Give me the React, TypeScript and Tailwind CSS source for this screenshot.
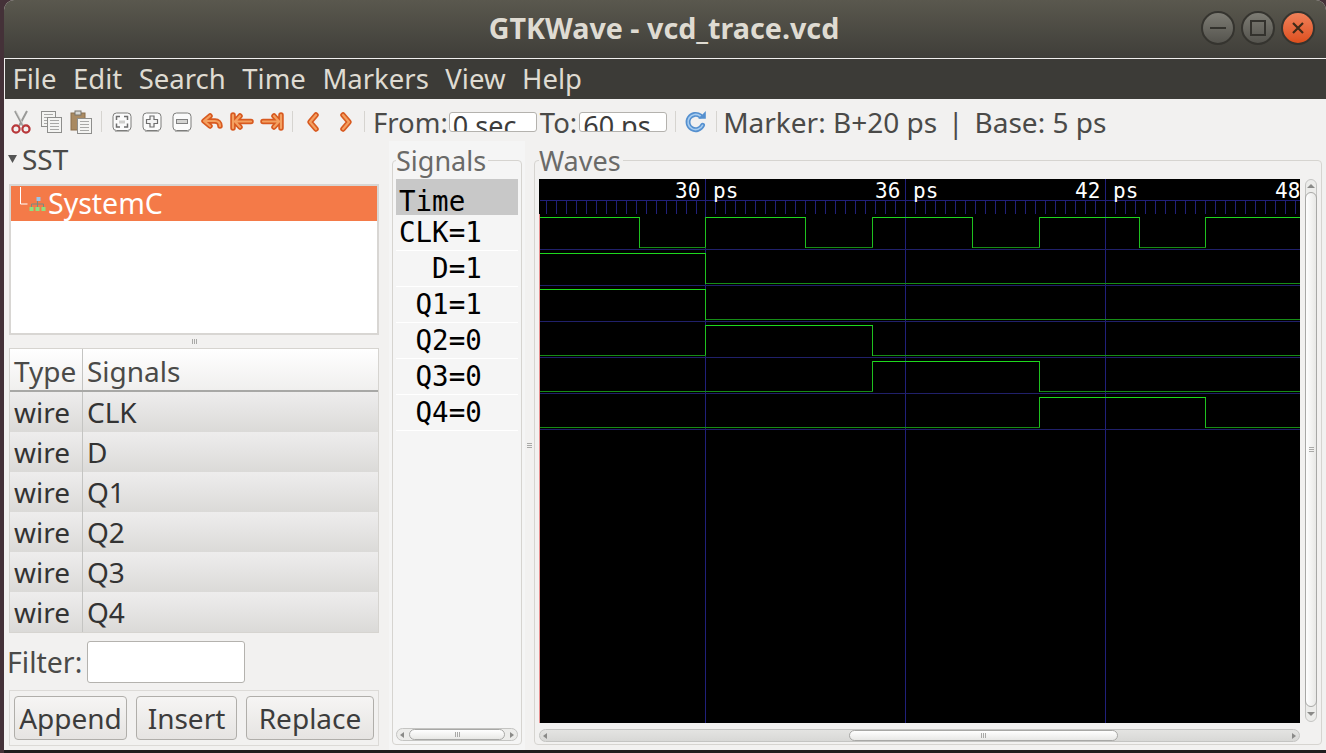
import React from 'react';

const menus = ['File', 'Edit', 'Search', 'Time', 'Markers', 'View', 'Help'];
const sigRows = ['CLK=1', '  D=1', ' Q1=1', ' Q2=0', ' Q3=0', ' Q4=0'];
const treeRows = ['CLK', 'D', 'Q1', 'Q2', 'Q3', 'Q4'];

// x offset is relative to the wave canvas (540 on screen)
const traces: { top: number; steps: number[]; high: boolean }[] = [
  { top: 38, steps: [99, 165, 265, 332, 432, 499, 599, 665], high: true },
  { top: 74, steps: [165], high: true },
  { top: 110, steps: [165], high: true },
  { top: 146, steps: [165, 332], high: false },
  { top: 182, steps: [332, 499], high: false },
  { top: 218, steps: [499, 665], high: false },
];

// splits a trace into flat runs so high and low can get their own green
function traceRuns(t: { top: number; steps: number[]; high: boolean }) {
  const edges = [-1, ...t.steps, 760];
  return edges.slice(0, -1).map((x, i) => ({
    x1: x,
    x2: edges[i + 1],
    high: i % 2 === 0 ? t.high : !t.high,
  }));
}

const ticks: number[] = [];
for (let x = 6; x < 165; x += 10) ticks.push(x);
for (let x = 175; x < 760; x += 10) ticks.push(x);

const Sep = ({ className = '' }: { className?: string }) => (
  <div className={`h-[21px] w-px shrink-0 bg-[#d6d4d0] ${className}`} />
);

const Cell = ({ children, className = '' }: { children: React.ReactNode; className?: string }) => (
  <div className={`flex h-[30px] w-[30px] shrink-0 items-center justify-center ${className}`}>{children}</div>
);

const Scissors = () => (
  <svg width="20" height="24" viewBox="0 0 20 24" fill="none">
    <path d="M4 1l8 15M16 1L8 16" stroke="#9a9a98" strokeWidth="2" />
    <path d="M5 1l8 15" stroke="#d8d8d6" strokeWidth="0.8" />
    <circle cx="5" cy="19" r="3.6" stroke="#b8383a" strokeWidth="2.2" />
    <circle cx="15" cy="19" r="3.6" stroke="#b8383a" strokeWidth="2.2" />
  </svg>
);

const Page = ({ x, y, w, h }: { x: number; y: number; w: number; h: number }) => (
  <g>
    <rect x={x + 0.5} y={y + 0.5} width={w} height={h} fill="#f4f4f2" stroke="#8e8e8c" />
    {[3, 6, 9, 12].map((o) =>
      o < h - 1 ? <path key={o} d={`M${x + 3} ${y + o + 0.5}H${x + w - 2}`} stroke="#a8a8a6" /> : null,
    )}
  </g>
);

const Copy = () => (
  <svg width="22" height="23" viewBox="0 0 22 23">
    <Page x={1} y={1} w={14} h={15} />
    <Page x={7} y={7} w={14} h={15} />
  </svg>
);

const Paste = () => (
  <svg width="22" height="24" viewBox="0 0 22 24">
    <rect x="1" y="3" width="14" height="17" fill="#a98a62" stroke="#8a6f4c" />
    <rect x="5" y="1" width="6" height="4" fill="#d8d8d4" stroke="#77736a" />
    <Page x={7} y={8} w={14} h={15} />
  </svg>
);

const KeyBox = ({ children }: { children: React.ReactNode }) => (
  <svg width="20" height="20" viewBox="0 0 20 20" fill="none">
    <rect x="1" y="1" width="18" height="17.500" rx="3.500" fill="#fbfbfb" stroke="#7d7d7b" />
    <path d="M3 19.500h14" stroke="#b4b4b2" />
    {children}
  </svg>
);

const Fit = () => (
  <KeyBox>
    <path d="M8 4.500H4.500V8M12 4.500h3.500V8M8 15h-3.500v-3.500M12 15h3.500v-3.500" stroke="#6e6e6e" strokeWidth="1.500" />
    <rect x="7" y="8.500" width="6" height="3" fill="#cfcfcd" />
  </KeyBox>
);

const Plus = () => (
  <KeyBox>
    <path d="M8 4h4v3.500h3.500v4H12V15H8v-3.500H4.500v-4H8z" fill="#f4f4f4" stroke="#6e6e6e" strokeWidth="1.200" />
  </KeyBox>
);

const Minus = () => (
  <KeyBox>
    <rect x="4.500" y="7.500" width="11" height="4" fill="#d4d4d2" stroke="#808080" />
  </KeyBox>
);

const Orange = ({ d, w = 24 }: { d: string; w?: number }) => (
  <svg width={w} height="22" viewBox={`0 0 ${w} 22`} fill="none" strokeLinecap="round" strokeLinejoin="round">
    <path d={d} stroke="#d85a20" strokeWidth="5.500" />
    <path d={d} stroke="#f4a060" strokeWidth="2.200" />
  </svg>
);

const Refresh = () => (
  <svg width="24" height="24" viewBox="0 0 22 22" fill="none">
    <path d="M17 14a7 7 0 1 1-2-8.500" stroke="#5590cf" strokeWidth="4.500" strokeLinecap="round" />
    <path d="M17 14a7 7 0 1 1-2-8.500" stroke="#a8cdf0" strokeWidth="1.500" strokeLinecap="round" />
    <path d="M13 8h7V1z" fill="#5590cf" />
  </svg>
);

const Tri = ({ dir }: { dir: 'left' | 'right' | 'up' | 'down' }) => {
  const d = { left: 'M5 1v6L1 4z', right: 'M3 1v6l4-3z', up: 'M4 2l4 4H0z', down: 'M4 6L0 2h8z' }[dir];
  return (
    <svg width="8" height="8" viewBox="0 0 8 8">
      <path d={d} fill="#8a8a88" />
    </svg>
  );
};

const Grip = ({ vertical = false }: { vertical?: boolean }) => (
  <div className={`flex gap-px ${vertical ? 'flex-col' : ''}`}>
    <div className={vertical ? 'h-px w-[5px] bg-[#a9a9a7]' : 'h-[5px] w-px bg-[#a9a9a7]'} />
    <div className={vertical ? 'h-px w-[5px] bg-[#a9a9a7]' : 'h-[5px] w-px bg-[#a9a9a7]'} />
    <div className={vertical ? 'h-px w-[5px] bg-[#a9a9a7]' : 'h-[5px] w-px bg-[#a9a9a7]'} />
  </div>
);

const Field = ({ value, className }: { value: string; className: string }) => (
  <div className={`h-[20px] shrink-0 overflow-hidden rounded-[3px] border border-[#b4b2ae] bg-white pl-[3px] text-[27px] leading-[25px] text-[#3c3c3c] ${className}`}>
    {value}
  </div>
);

const Btn = ({ label, className }: { label: string; className: string }) => (
  <button className={`flex h-[44px] items-center justify-center rounded-[4px] border border-[#b0aeaa] bg-gradient-to-b from-[#f6f5f4] to-[#e6e4e2] text-[28px] text-[#3c3c3c] ${className}`}>
    {label}
  </button>
);

export default function App() {
  return (
    <div className="relative h-[753px] w-[1326px] overflow-hidden bg-[#443138] pl-[4px] font-['Noto_Sans','Open_Sans',sans-serif]">
      <div className="relative z-10 flex h-[750px] w-[1322px] flex-col overflow-hidden rounded-t-[10px] bg-[#f2f1f0]">
        {/* Title bar */}
        <div className="relative flex h-[58px] shrink-0 items-center justify-center bg-gradient-to-b from-[#5a584e] to-[#3f3e39] pb-[3px] pr-[2px]">
          <span className="text-[28.700px] font-bold text-[#dfdbd2]">GTKWave - vcd_trace.vcd</span>
          <div className="absolute right-[11px] top-[11px] flex gap-[6px]">
            <div className="flex h-[34px] w-[34px] items-center justify-center rounded-full border-2 border-[#35342f] bg-gradient-to-b from-[#7d7c74] to-[#55544e]">
              <div className="h-[2px] w-[16px] bg-[#33322d]" />
            </div>
            <div className="flex h-[34px] w-[34px] items-center justify-center rounded-full border-2 border-[#35342f] bg-gradient-to-b from-[#7d7c74] to-[#55544e]">
              <div className="h-[16px] w-[16px] border-2 border-[#33322d]" />
            </div>
            <div className="flex h-[34px] w-[34px] items-center justify-center rounded-full border-2 border-[#35342f] bg-gradient-to-b from-[#f08058] to-[#dd4f1c]">
              <svg width="16" height="16" viewBox="0 0 16 16">
                <path d="M3 3l10 10M13 3L3 13" stroke="#3f2a18" strokeWidth="2.200" />
              </svg>
            </div>
          </div>
        </div>

        {/* Menu bar */}
        <div className="flex h-[41px] shrink-0 items-center gap-[16.500px] border-t border-l border-[#f0efee] bg-[#3c3b37] pl-[7.500px] text-[27.500px] text-[#dfdbd2]">
          {menus.map((m) => (
            <span key={m}>{m}</span>
          ))}
        </div>

        {/* Toolbar */}
        <div className="flex h-[42px] shrink-0 items-center pl-[2px] pt-[3px] text-[28px] text-[#4a4a48]">
          <Cell><Scissors /></Cell>
          <Cell><Copy /></Cell>
          <Cell><Paste /></Cell>
          <Sep className="mx-[5px]" />
          <Cell><Fit /></Cell>
          <Cell><Plus /></Cell>
          <Cell><Minus /></Cell>
          <Cell><Orange d="M10 5l-6 5 6 5M5 10h10c3 0 5 2 5 5" /></Cell>
          <Cell><Orange d="M3 4v13M10 5l-5 5.500 5 5.500M6 10.500h15" /></Cell>
          <Cell><Orange d="M21 4v13M14 5l5 5.500-5 5.500M18 10.500H3" /></Cell>
          <Sep className="mx-[5px]" />
          <Cell><Orange d="M15 4l-6 7 6 7" /></Cell>
          <Cell className="ml-[3px]"><Orange d="M9 4l6 7-6 7" /></Cell>
          <Sep className="ml-[3px] mr-[8px]" />
          <span className="mt-[2px] text-[27.500px]">From:</span>
          <Field value="0 sec" className="ml-[1px] w-[88px]" />
          <span className="ml-[3px] mt-[2px] text-[27.500px]">To:</span>
          <Field value="60 ps" className="ml-[2px] w-[88px]" />
          <Sep className="ml-[8px]" />
          <Cell className="ml-[5px]"><Refresh /></Cell>
          <Sep className="ml-[5px] mr-[6px]" />
          <div className="flex gap-[11px]">
            <span>Marker: B+20 ps</span>
            <span>|</span>
            <span>Base: 5 ps</span>
          </div>
        </div>

        {/* Panes */}
        <div className="flex min-h-0 flex-1">
          {/* SST + signal list */}
          <div className="flex w-[385px] shrink-0 flex-col pl-[5px] pr-[10px]">
            <div className="flex h-[43px] shrink-0 items-center gap-[5px] pb-[8px] text-[28px] text-[#4a4a48]">
              <svg width="9" height="8" viewBox="0 0 9 8" className="-ml-[1px]"><path d="M0 0h9L4.500 8z" fill="#555" /></svg>
              <span>SST</span>
            </div>
            <div className="h-[151px] shrink-0 border-2 border-[#d8d6d3] bg-white">
              <div className="flex h-[35px] items-center bg-[#f47a48] text-[28.500px] text-white">
                <svg width="37" height="34" viewBox="0 0 36 34" className="shrink-0">
                  <path d="M9 0v17h7" stroke="#fff" fill="none" />
                  <rect x="25" y="10" width="4" height="4" fill="#9cc4e8" />
                  <path d="M20 20v-3h12v3M26 14v6" stroke="#7d8a7d" fill="none" />
                  <rect x="18" y="20" width="4" height="4" fill="#8fe07f" />
                  <rect x="24" y="20" width="4" height="4" fill="#8fe07f" />
                  <rect x="30" y="20" width="4" height="4" fill="#8fe07f" />
                </svg>
                <span>SystemC</span>
              </div>
            </div>
            <div className="flex h-[13px] shrink-0 items-center justify-center">
              <Grip />
            </div>
            <div className="shrink-0 border border-[#d6d4d0]">
              <div className="flex h-[43px] border-b-2 border-[#a8a8a6] bg-gradient-to-b from-white to-[#f0efee] text-[28px] text-[#4a4a48]">
                <div className="flex w-[73px] items-center border-r border-[#c4c4c2] pl-[4px] pt-[2px]">Type</div>
                <div className="flex items-center pl-[4px] pt-[2px]">Signals</div>
              </div>
              {treeRows.map((r) => (
                <div key={r} className="flex h-[40px] bg-gradient-to-b from-[#eeeded] to-[#dbdad8] text-[28px] text-[#333]">
                  <div className="flex w-[73px] items-center border-r border-[#c4c4c2] pl-[4px]">wire</div>
                  <div className="flex items-center pl-[4px]">{r}</div>
                </div>
              ))}
            </div>
            <div className="-ml-[2px] flex h-[57px] shrink-0 items-center gap-[2px] pt-[1px] text-[28.500px] text-[#4a4a48]">
              <span className="w-[78px]">Filter:</span>
              <div className="h-[42px] w-[158px] rounded-[3px] border border-[#b4b2ae] bg-white" />
            </div>
            <div className="flex h-[56px] shrink-0 items-center justify-between border border-[#dcdad7] px-[4px]">
              <Btn label="Append" className="w-[113px]" />
              <Btn label="Insert" className="w-[101px]" />
              <Btn label="Replace" className="w-[128px]" />
            </div>
          </div>

          {/* Signals pane */}
          <div className="flex w-[136px] shrink-0 flex-col bg-[#f5f5f5] px-[3px] pt-[6px]">
            <div className="relative mt-[13px] flex h-[585px] flex-col rounded-[4px] border border-[#d6d4d0] px-[3px] pt-[18px]">
              <span className="absolute -top-[18px] left-[3px] bg-[#f5f5f5] pr-[2px] text-[27px] leading-[36px] text-[#6a6a68]">Signals</span>
              <div className="flex min-h-0 flex-1 flex-col font-['DejaVu_Sans_Mono',monospace] text-[27.500px] text-black">
                <div className="h-[36px] whitespace-pre bg-[#c8c8c8] pl-[3px] pt-[4px] leading-[36px]">Time</div>
                {sigRows.map((s) => (
                  <div key={s} className="h-[36px] whitespace-pre border-b border-white pl-[3px] leading-[34.500px]">{s}</div>
                ))}
              </div>
              <div className="mb-[3px] flex h-[13px] shrink-0 items-center rounded-full border border-[#c4c4c2] bg-[#ececea]">
                <div className="flex w-[12px] justify-center"><Tri dir="left" /></div>
                <div className="flex h-full flex-1 items-center justify-center rounded-full border border-[#a8a8a6] bg-gradient-to-b from-white to-[#e8e8e6]"><Grip /></div>
                <div className="flex w-[12px] justify-center"><Tri dir="right" /></div>
              </div>
            </div>
          </div>

          {/* Paned handle */}
          <div className="flex w-[9px] shrink-0 items-center justify-center"><Grip vertical /></div>

          {/* Waves pane */}
          <div className="relative mb-[5px] mr-[4px] mt-[19px] flex flex-1 flex-col rounded-[4px] border border-[#d6d4d0] pl-[4px] pt-[18px]">
            <span className="absolute -top-[18px] left-[4px] bg-[#f2f1f0] pr-[2px] text-[27px] leading-[36px] text-[#6a6a68]">Waves</span>
            <div className="flex min-h-0">
              <svg width="761" height="544" viewBox="-1 0 761 544" className="block shrink-0 bg-black" shapeRendering="crispEdges">
                <rect x="-1" y="35" width="1" height="509" fill="#e88f8f" />
                {[165, 365, 565].map((x) => (
                  <path key={x} d={`M${x + 0.5} 0V544`} stroke="#20207a" />
                ))}
                <path d="M0 21.500H760" stroke="#20207a" />
                {ticks.map((x) => (
                  <path key={x} d={`M${x + 0.5} 22V35`} stroke="#20207a" />
                ))}
                {[70, 106, 142, 178, 214, 250].map((y) => (
                  <path key={y} d={`M0 ${y + 0.5}H760`} stroke="#20206a" />
                ))}
                {traces.map((t) => (
                  <g key={t.top} fill="none">
                    {t.steps.map((x) => (
                      <path key={x} d={`M${x + 0.5} ${t.top}V${t.top + 31}`} stroke="#1fc01f" />
                    ))}
                    {traceRuns(t).map((r) => (
                      <path
                        key={r.x1}
                        d={`M${r.x1 + 1} ${r.high ? t.top + 0.5 : t.top + 30.5}H${r.x2 + 1}`}
                        stroke={r.high ? '#1ed81e' : '#168c16'}
                      />
                    ))}
                  </g>
                ))}
                <g fill="#ffffff" fontFamily="'DejaVu Sans Mono', monospace" fontSize="21" shapeRendering="auto">
                  <text x="135" y="19">30</text>
                  <text x="173" y="19">ps</text>
                  <text x="335" y="19">36</text>
                  <text x="373" y="19">ps</text>
                  <text x="535" y="19">42</text>
                  <text x="573" y="19">ps</text>
                  <text x="735" y="19">48</text>
                </g>
              </svg>
              <div className="ml-[5px] flex h-[543px] w-[12px] shrink-0 flex-col items-center rounded-full border border-[#c4c4c2] bg-[#ececea]">
                <div className="flex h-[12px] items-center"><Tri dir="up" /></div>
                <div className="flex w-[12px] flex-1 items-center justify-center rounded-full border border-[#a8a8a6] bg-gradient-to-r from-white to-[#e8e8e6]"><Grip vertical /></div>
                <div className="flex h-[14px] items-center"><Tri dir="down" /></div>
              </div>
            </div>
            <div className="mr-[21px] mt-[6px] flex h-[13px] items-center rounded-full border border-[#c4c4c2] bg-gradient-to-b from-[#e4e4e2] to-[#d8d8d6]">
              <div className="flex w-[12px] justify-center"><Tri dir="left" /></div>
              <div className="ml-[297px] flex h-full w-[269px] items-center justify-center rounded-full border border-[#a8a8a6] bg-gradient-to-b from-white to-[#e8e8e6]"><Grip /></div>
              <div className="flex-1" />
              <div className="flex w-[12px] justify-center"><Tri dir="right" /></div>
            </div>
          </div>
        </div>
      </div>

      {/* Strip of desktop under the window */}
      <div className="absolute bottom-0 left-[4px] right-0 h-[3px] overflow-hidden bg-[#1f1c1e]">
        <span className="absolute left-[194px] top-0 text-[28px] leading-[28px] text-[#b8b8b8]">primos.png</span>
      </div>
    </div>
  );
}
